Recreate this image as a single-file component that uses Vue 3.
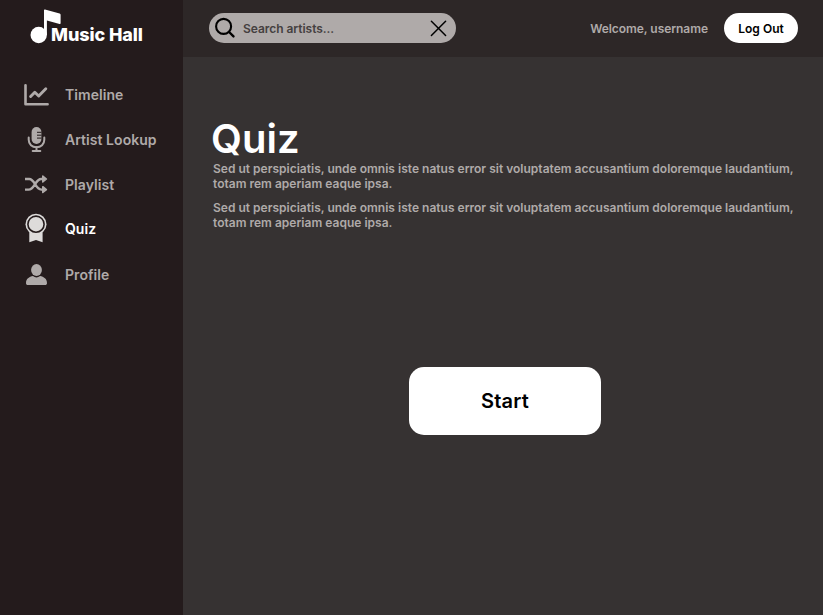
<script setup>
const items = [
  { label: 'Timeline', icon: 'chart' },
  { label: 'Artist Lookup', icon: 'mic' },
  { label: 'Playlist', icon: 'shuffle' },
  { label: 'Quiz', icon: 'ribbon', active: true },
  { label: 'Profile', icon: 'person' }
]
const copy = 'Sed ut perspiciatis, unde omnis iste natus error sit voluptatem accusantium doloremque laudantium, totam rem aperiam eaque ipsa.'
</script>

<template>
  <div class="app">
    <aside class="sidebar">
      <div class="brand">
        <svg class="note" width="32" height="36" viewBox="0 0 32 36">
          <circle cx="8.7" cy="26" r="8.2" fill="#fff" />
          <path d="M14 .9 Q14 .2 15 .5 L29.6 4.5 Q30.6 4.8 30.6 5.8 V14.2 Q30.6 15.2 29.6 14.9 L16.9 11.5 V26 H14 Z" fill="#fff" />
        </svg>
        <span class="brand-name">Music Hall</span>
      </div>
      <nav class="nav">
        <a v-for="item in items" :key="item.label" class="nav-item" :class="{ active: item.active }">
          <svg class="icon" width="30" height="34" viewBox="0 0 30 34" fill="none">
            <g v-if="item.icon === 'chart'" stroke="currentColor" stroke-width="2.6" stroke-linecap="round" stroke-linejoin="round">
              <path d="M5.5 7.2 V26.3 H27.6" />
              <path d="M10.6 18.5 L14.8 14.2 L18.7 18 L25.8 10.8" stroke-width="2.9" />
            </g>
            <g v-else-if="item.icon === 'mic'">
              <rect x="11.6" y="4" width="9.8" height="17" rx="4.9" fill="currentColor" />
              <path d="M17 9.3H21.5M17 12.2H21.5M17 15.1H21.5" stroke="#241b1c" stroke-width="1" />
              <path d="M8.7 14.5V16.7C8.7 21.3 12.1 24.3 16.5 24.3S24.3 21.3 24.3 16.7V14.5M16.5 24V28M12.7 28H20.3" stroke="currentColor" stroke-width="2" stroke-linecap="round" />
            </g>
            <g v-else-if="item.icon === 'shuffle'">
              <path d="M5 11H9.2C15 11 15.2 21.6 21.3 21.6H24M5 21.6H8.5C14.8 21.6 15 11 21.3 11H24" stroke="currentColor" stroke-width="2.4" />
              <path d="M22.8 8.1L26.4 11L22.8 13.9ZM22.8 18.7L26.4 21.6L22.8 24.5Z" fill="currentColor" stroke="currentColor" stroke-width="1.6" stroke-linejoin="round" />
            </g>
            <g v-else-if="item.icon === 'ribbon'">
              <path d="M9.3 20V30.2L16 28L22.6 30.2V20Z" fill="currentColor" />
              <circle cx="16" cy="12.2" r="10.5" fill="currentColor" />
              <circle cx="16" cy="12.2" r="8.1" stroke="#241b1c" stroke-width="1.6" />
            </g>
            <g v-else fill="currentColor">
              <ellipse cx="16.5" cy="12" rx="5.4" ry="6.1" />
              <path d="M6 25.2C6 20.8 9.2 18.8 13 18.1C15 20 18 20 20 18.1C23.8 18.8 27 20.8 27 25.2C27 26.4 26.2 27 25.2 27H7.8C6.8 27 6 26.4 6 25.2Z" />
            </g>
          </svg>
          <span>{{ item.label }}</span>
        </a>
      </nav>
    </aside>
    <div class="content">
      <header class="topbar">
        <div class="search">
          <svg width="22" height="22" viewBox="0 0 22 22" fill="none" stroke="#000" stroke-linecap="round">
            <circle cx="8.6" cy="9.4" r="7.5" stroke-width="2.1" />
            <path d="M14.1 15L18.5 19.4" stroke-width="2.4" />
          </svg>
          <span class="placeholder">Search artists...</span>
          <svg class="clear" width="18" height="18" viewBox="0 0 18 18" fill="none" stroke="#000" stroke-width="1.5" stroke-linecap="round">
            <path d="M2.4 2.3L16.6 16.5M16.6 2.3L2.4 16.5" />
          </svg>
        </div>
        <span class="welcome">Welcome, username</span>
        <button class="logout">Log Out</button>
      </header>
      <main class="main">
        <h1>Quiz</h1>
        <p>{{ copy }}</p>
        <p>{{ copy }}</p>
        <button class="start">Start</button>
      </main>
    </div>
  </div>
</template>

<style>
body { margin: 0; background: #363232; }
</style>

<style scoped>
.app { display: flex; width: 100%; height: 100vh; overflow: hidden; font-family: Inter, sans-serif; font-weight: 600; color: #afaaa9; background: #363232; }
button { border: 0; padding: 0; font: inherit; color: #000; background: #fff; }
.sidebar { width: 183px; flex: none; background: #241b1c; }
.brand { display: flex; height: 36px; padding: 9px 0 0 30px; }
.note { flex: none; }
.brand-name { margin: 14px 0 0 -11px; font-size: 18px; line-height: 24px; font-weight: 800; letter-spacing: -0.1px; color: #fff; white-space: nowrap; }
.nav { display: flex; flex-direction: column; padding-top: 27px; }
.nav-item { display: flex; align-items: center; gap: 15px; height: 45px; padding-left: 20px; font-size: 14px; line-height: 20px; letter-spacing: 0.05px; }
.icon { flex: none; }
.nav-item.active { height: 43px; padding-bottom: 2px; color: #fff; }
.active .icon { color: #dddbda; }
.content { flex: 1; display: flex; flex-direction: column; }
.topbar { display: flex; align-items: center; height: 57px; box-sizing: border-box; padding: 0 25px 1px 26px; background: #2d2727; font-size: 12px; }
.search { display: flex; align-items: center; width: 247px; height: 30px; box-sizing: border-box; padding: 0 9px 0 6px; border-radius: 15px; background: #afaaa9; }
.placeholder { margin-left: 6px; color: #454040; letter-spacing: -0.04px; }
.clear { margin-left: auto; }
.welcome { margin-left: auto; letter-spacing: -0.05px; }
.logout { width: 74px; height: 30px; margin-left: 16px; border-radius: 15px; }
.main { display: flex; flex-direction: column; padding: 58px 26px 0 30px; }
h1 { margin: 0 0 -2px -2px; font-size: 40px; line-height: 48px; font-weight: 600; color: #fff; }
p { margin: 0 0 9px; font-size: 12px; line-height: 15px; letter-spacing: 0.01px; }
.start { align-self: center; width: 192px; height: 68px; margin-top: 128px; border-radius: 15px; font-size: 20px; letter-spacing: 0.2px; }
</style>
